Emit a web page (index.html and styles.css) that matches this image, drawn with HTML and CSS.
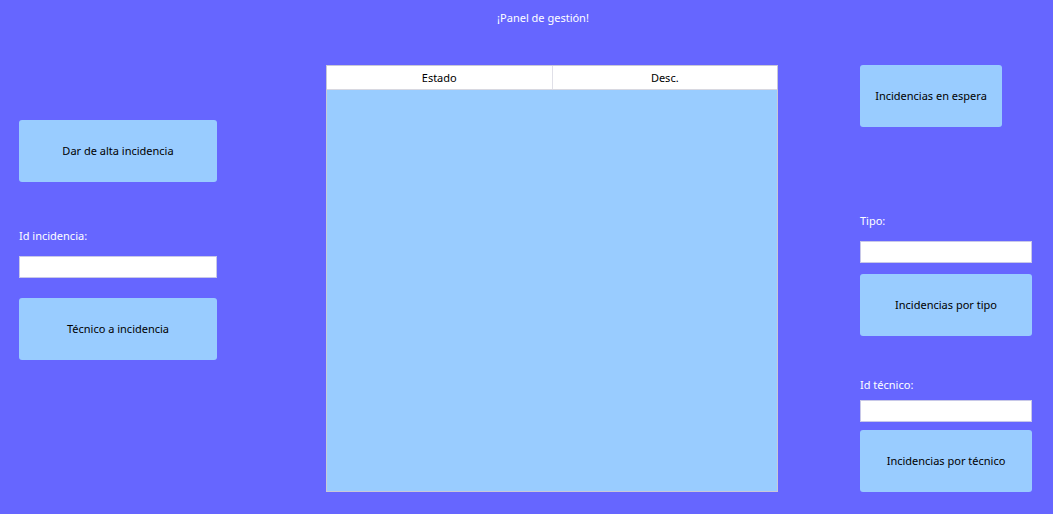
FILE: index.html
```html
<!DOCTYPE html>
<html lang="es">
<head>
<meta charset="utf-8">
<title>Panel de gestión</title>
<link rel="stylesheet" href="styles.css">
</head>
<body>
<header class="title">¡Panel de gestión!</header>
<main class="layout">
  <section class="col col-left">
    <button class="btn btn-alta">Dar de alta incidencia</button>
    <label class="field-label label-incidencia">Id incidencia:</label>
    <input class="field field-incidencia" type="text">
    <button class="btn btn-tecnico-inc">Técnico a incidencia</button>
  </section>
  <section class="col col-center">
    <div class="table">
      <div class="thead">
        <div class="th">Estado</div>
        <div class="th">Desc.</div>
      </div>
      <div class="tbody"></div>
    </div>
  </section>
  <section class="col col-right">
    <button class="btn btn-espera">Incidencias en espera</button>
    <label class="field-label label-tipo">Tipo:</label>
    <input class="field field-tipo" type="text">
    <button class="btn btn-tipo">Incidencias por tipo</button>
    <label class="field-label label-tecnico">Id técnico:</label>
    <input class="field field-tecnico" type="text">
    <button class="btn btn-por-tecnico">Incidencias por técnico</button>
  </section>
</main>
</body>
</html>
```
FILE: styles.css
```css
* { box-sizing: border-box; }
html, body {
  margin: 0;
  padding: 0;
  width: 1053px;
  height: 514px;
  overflow: hidden;
  background: #6666ff;
  font-family: "Noto Sans", "Open Sans", sans-serif;
  font-size: 11px;
}
.title {
  height: 65px;
  padding-top: 10px;
  line-height: 16px;
  text-align: center;
  color: #ffffff;
  padding-left: 33px;
}
.layout {
  display: flex;
  align-items: flex-start;
  padding-left: 19px;
}
.col {
  display: flex;
  flex-direction: column;
  align-items: flex-start;
}
.col-left { width: 198px; padding-top: 55px; }
.col-center { width: 452px; margin-left: 109px; }
.col-right { width: 172px; margin-left: 82px; }

.btn {
  display: flex;
  align-items: center;
  justify-content: center;
  height: 62px;
  width: 100%;
  background: #99ccff;
  border: none;
  border-radius: 3px;
  color: #000000;
  font-family: inherit;
  font-size: 11px;
  padding: 0 0 1px;
}
.btn-espera { width: 142px; }

.field-label {
  display: block;
  color: #ffffff;
  line-height: 16px;
}
.field {
  display: block;
  width: 100%;
  height: 22px;
  background: #ffffff;
  border: 1px solid #c8c8e8;
  padding: 0 4px;
  font-family: inherit;
  font-size: 11px;
}

.label-incidencia { margin-top: 46px; }
.field-incidencia { margin-top: 12px; }
.btn-tecnico-inc { margin-top: 20px; }

.label-tipo { margin-top: 86px; }
.field-tipo { margin-top: 12px; }
.btn-tipo { margin-top: 11px; }
.label-tecnico { margin-top: 41px; }
.field-tecnico { margin-top: 7px; }
.btn-por-tecnico { margin-top: 8px; }

.table {
  width: 452px;
  height: 427px;
  display: flex;
  flex-direction: column;
  border: 1px solid #c8c8d8;
  background: #99ccff;
}
.thead {
  display: flex;
  height: 24px;
  background: #ffffff;
  border-bottom: 1px solid #d8d8e0;
}
.th {
  flex: 1;
  display: flex;
  align-items: center;
  justify-content: center;
  color: #000000;
}
.th + .th { border-left: 1px solid #e0e0e8; }
.tbody { flex: 1; }
```
